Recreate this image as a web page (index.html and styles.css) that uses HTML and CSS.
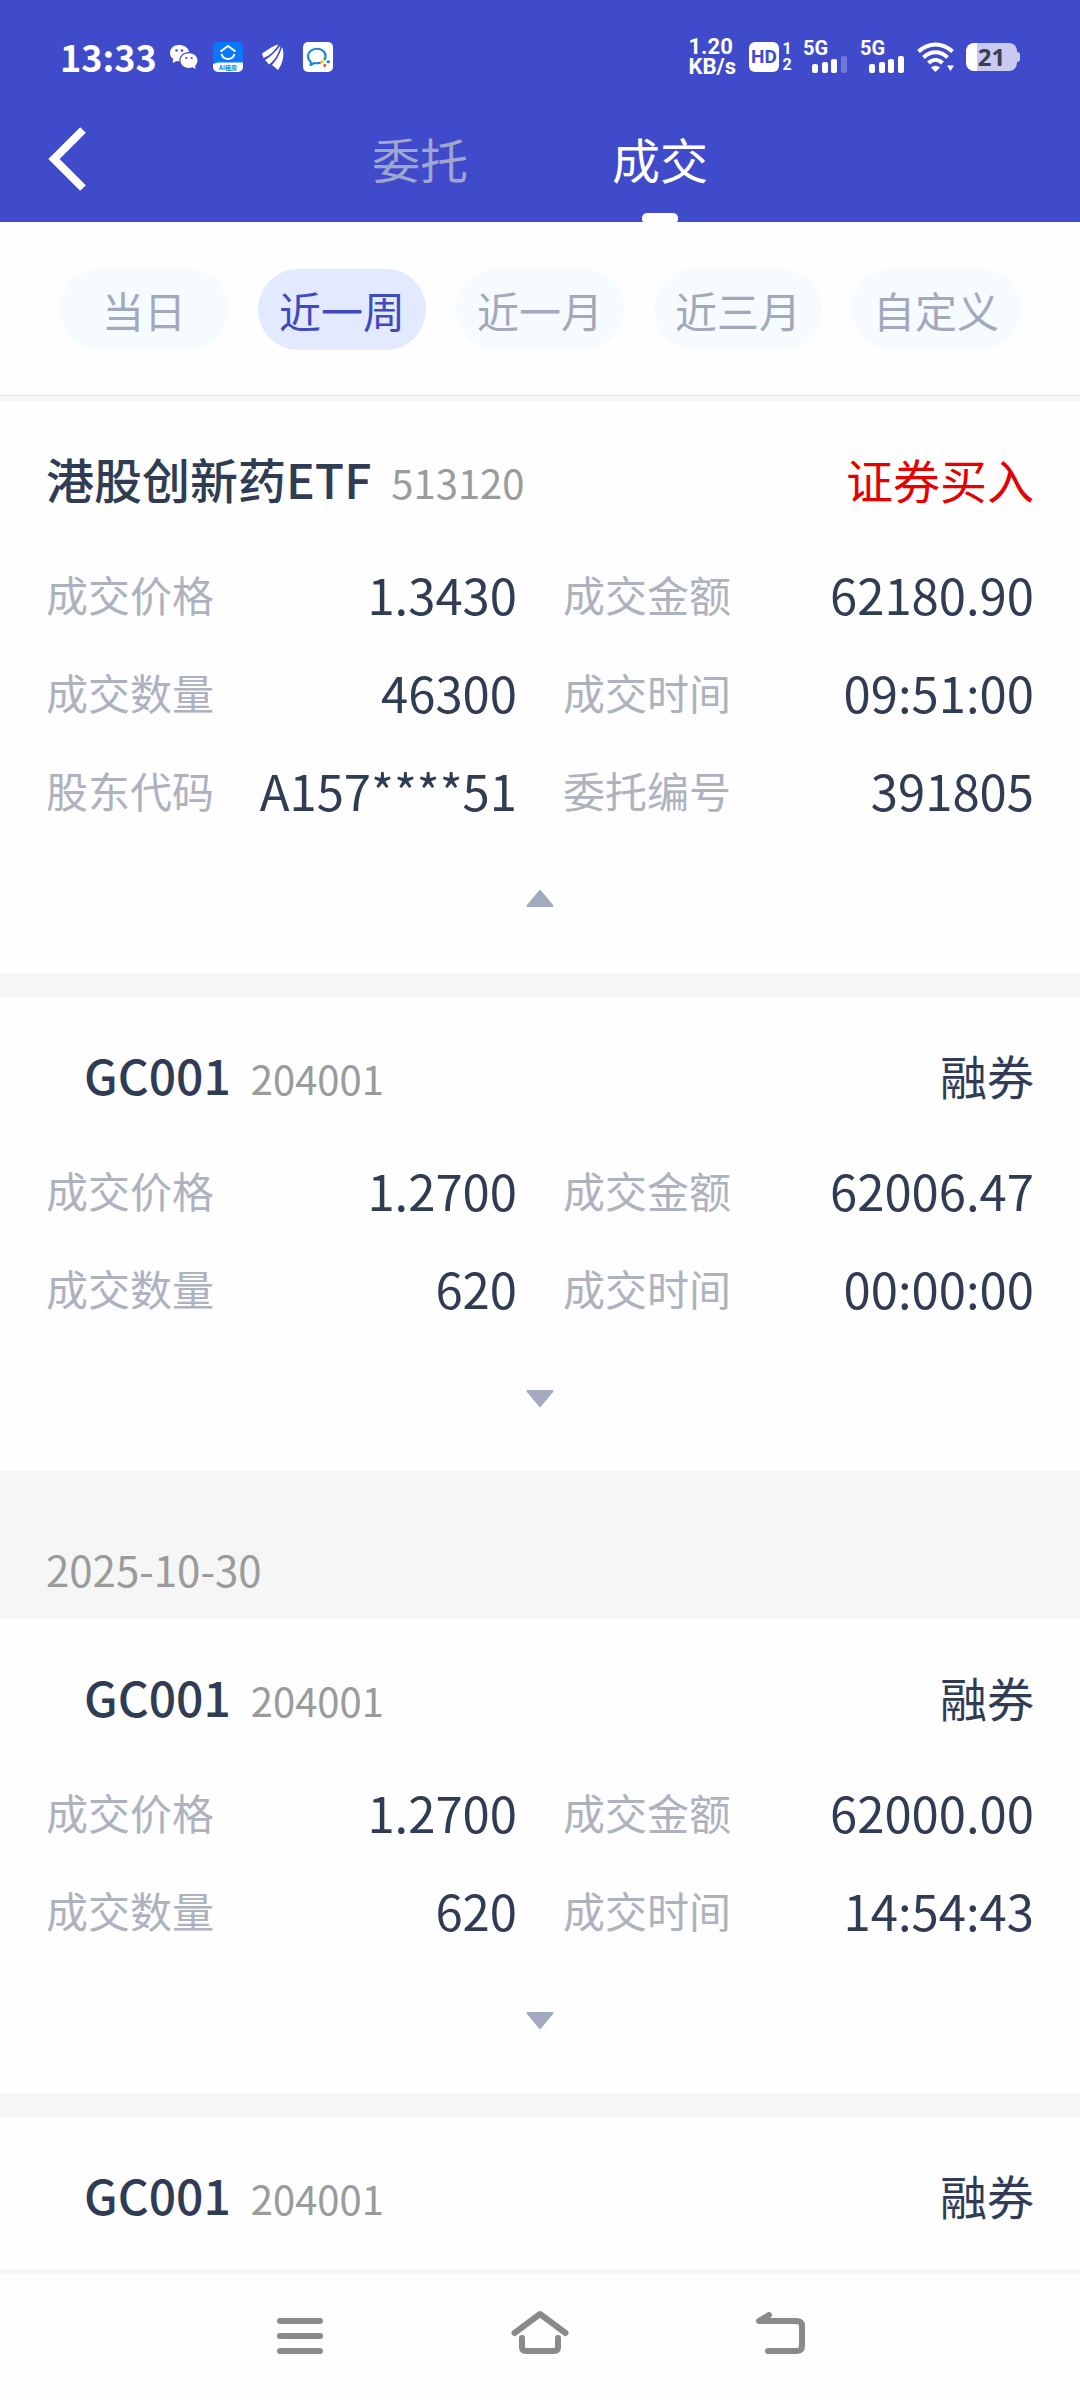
FILE: index.html
```html
<!DOCTYPE html>
<html lang="zh-CN">
<head>
<meta charset="utf-8">
<meta name="viewport" content="width=device-width, initial-scale=1">
<title>成交</title>
<link rel="stylesheet" href="styles.css">
</head>
<body>
<div class="app">
  <header class="header">
    <div class="status">
      <div class="status-left">
        <span class="clock">13:33</span>
        <svg class="ico-wechat" viewBox="0 0 30 26" aria-hidden="true">
          <path fill="#fff" d="M10 1C4.500 1 1 4.500 1 9c0 2.500 1.200 4.600 3.200 6L3.600 19l4.200-2c1 .2 1.700.2 2.600.2C10 12 14 8 20.300 8 19 3.500 15 1 10 1z"/>
          <path fill="#fff" d="M20 9.200c-5 0-8.500 3.200-8.500 7.300s3.500 7.400 8.500 7.400c1.200 0 2.300-.2 3.400-.6l3.300 1.800-.7-3.200c1.600-1.300 2.500-3.200 2.500-5.400 0-4.100-3.500-7.300-8.500-7.300z"/>
          <g fill="#3f4bcb"><circle cx="7.500" cy="6.500" r="1.300"/><circle cx="13" cy="6.500" r="1.300"/><circle cx="17.300" cy="14" r="1.100"/><circle cx="22.700" cy="14" r="1.100"/></g>
        </svg>
        <svg class="ico-app" viewBox="0 0 30 30" aria-hidden="true">
          <rect width="30" height="30" rx="5" fill="#0a78fa"/>
          <path d="M0 22L5 20.500H30V25a5 5 0 0 1-5 5H5a5 5 0 0 1-5-5z" fill="#fff"/>
          <path d="M7.500 9.500L15 4l7.500 5.500M8.500 12c2 6.500 11 6.500 13 0" fill="none" stroke="#fff" stroke-width="2" stroke-linejoin="round"/>
          <text x="15" y="28" text-anchor="middle" font-size="6" font-weight="700" fill="#0a78fa">AI租房</text>
        </svg>
        <svg class="ico-wing" viewBox="0 0 24 28" aria-hidden="true">
          <path fill="#fff" d="M17.500 1.500C11 3 5 8 1 10.500L2.500 15C8 13 14 8 17.500 1.500zM19.500 2.500C15 9 9 14 4 17L8 21.500C13 18 18 11 19.500 2.500zM21 4C19 11 15 18 11 22L17 27C22 20 24 11 21 4z"/>
        </svg>
        <svg class="ico-chat" viewBox="0 0 30 30" aria-hidden="true">
          <rect width="30" height="30" rx="5" fill="#fff"/>
          <path d="M22.500 15.500c.8-5-3-8.800-8.500-8.800-5.500 0-9 3.500-9 7.500 0 2.300 1 4.200 2.800 5.600L7.500 23l3.800-2c2 .5 4 .4 6-.2" fill="none" stroke="#1485dd" stroke-width="2" stroke-linecap="round" stroke-linejoin="round"/>
          <g stroke-width="3" stroke-linecap="round"><path d="M21.800 16.500v.5" stroke="#35b34a"/><path d="M25 19.800h.5" stroke="#1485dd"/><path d="M21.800 23.200v.3" stroke="#f0562d"/><path d="M18.500 19.800h.5" stroke="#f9bd17"/></g>
        </svg>
      </div>
      <div class="status-right">
        <div class="speed"><span>1.20</span><span>KB/s</span></div>
        <span class="hd">HD</span>
        <span class="sims"><span>1</span><span>2</span></span>
        <div class="signal">
          <span class="net">5G</span>
          <svg viewBox="0 0 36 17" aria-hidden="true"><g fill="#fff"><rect y="8" width="6" height="9" rx="2"/><rect x="10" y="6" width="6" height="11" rx="2"/><rect x="19" y="3" width="6" height="14" rx="2"/><rect x="29" width="6" height="17" rx="2" opacity=".25"/></g></svg>
        </div>
        <div class="signal">
          <span class="net">5G</span>
          <svg viewBox="0 0 36 17" aria-hidden="true"><g fill="#fff"><rect y="8" width="6" height="9" rx="2"/><rect x="10" y="6" width="6" height="11" rx="2"/><rect x="19" y="3" width="6" height="14" rx="2"/><rect x="29" width="6" height="17" rx="2"/></g></svg>
        </div>
        <svg class="ico-wifi" viewBox="0 0 38 30" aria-hidden="true">
          <path d="M1.500 9.500c10-9.500 24-9.500 34 0M6.500 15.500c7-7 17-7 24 0M11.500 21c4.200-4 9.800-4 14 0" fill="none" stroke="#fff" stroke-width="4"/>
          <path d="M14 25.500q4.500-3.500 9 0L18.500 30zM30 23.500h7l-3.500 5.500z" fill="#fff"/>
        </svg>
        <div class="battery"><span>21</span></div>
      </div>
    </div>
    <div class="titlebar">
      <button class="back" aria-label="返回">
        <svg viewBox="0 0 38 64" aria-hidden="true"><path d="M35 3L6 32l29 29" fill="none" stroke="#fff" stroke-width="8"/></svg>
      </button>
      <nav class="tabs">
        <a class="tab" href="#orders">委托</a>
        <a class="tab is-active" href="#deals" aria-current="page">成交</a>
      </nav>
    </div>
  </header>

  <div class="filters">
    <button class="chip">当日</button>
    <button class="chip is-active">近一周</button>
    <button class="chip">近一月</button>
    <button class="chip">近三月</button>
    <button class="chip">自定义</button>
  </div>

  <main class="list" id="deals">
    <article class="card">
      <div class="card-head"><h2 class="name">港股创新药ETF</h2><span class="code">513120</span><span class="side buy">证券买入</span></div>
      <dl class="fields">
        <div class="field"><dt>成交价格</dt><dd>1.3430</dd></div>
        <div class="field"><dt>成交金额</dt><dd>62180.90</dd></div>
        <div class="field"><dt>成交数量</dt><dd>46300</dd></div>
        <div class="field"><dt>成交时间</dt><dd>09:51:00</dd></div>
        <div class="field"><dt>股东代码</dt><dd>A157****51</dd></div>
        <div class="field"><dt>委托编号</dt><dd>391805</dd></div>
      </dl>
      <button class="toggle" aria-label="收起"><svg viewBox="0 0 28 22" aria-hidden="true"><path d="M14 2L26.500 17h-25z"/></svg></button>
    </article>

    <article class="card">
      <div class="card-head indent"><h2 class="name">GC001</h2><span class="code">204001</span><span class="side">融券</span></div>
      <dl class="fields">
        <div class="field"><dt>成交价格</dt><dd>1.2700</dd></div>
        <div class="field"><dt>成交金额</dt><dd>62006.47</dd></div>
        <div class="field"><dt>成交数量</dt><dd>620</dd></div>
        <div class="field"><dt>成交时间</dt><dd>00:00:00</dd></div>
      </dl>
      <button class="toggle" aria-label="展开"><svg viewBox="0 0 28 22" aria-hidden="true"><path d="M14 19L1.500 4h25z"/></svg></button>
    </article>

    <h3 class="date">2025-10-30</h3>

    <article class="card">
      <div class="card-head indent"><h2 class="name">GC001</h2><span class="code">204001</span><span class="side">融券</span></div>
      <dl class="fields">
        <div class="field"><dt>成交价格</dt><dd>1.2700</dd></div>
        <div class="field"><dt>成交金额</dt><dd>62000.00</dd></div>
        <div class="field"><dt>成交数量</dt><dd>620</dd></div>
        <div class="field"><dt>成交时间</dt><dd>14:54:43</dd></div>
      </dl>
      <button class="toggle" aria-label="展开"><svg viewBox="0 0 28 22" aria-hidden="true"><path d="M14 19L1.500 4h25z"/></svg></button>
    </article>

    <article class="card">
      <div class="card-head indent"><h2 class="name">GC001</h2><span class="code">204001</span><span class="side">融券</span></div>
    </article>
  </main>

  <nav class="sysnav">
    <button aria-label="最近任务"><svg viewBox="0 0 60 60" aria-hidden="true"><path d="M10 15h40M10 30h40M10 45h40"/></svg></button>
    <button aria-label="主屏幕"><svg viewBox="0 0 60 60" aria-hidden="true"><path d="M4.500 27L30 8l25.500 19M12 32v9q0 4 4 4h28q4 0 4-4v-9"/></svg></button>
    <button aria-label="返回上一级"><svg viewBox="0 0 60 60" aria-hidden="true"><path d="M19 9L9 15h37q6 0 6 5v20q0 5-6 5H18"/></svg></button>
  </nav>
</div>
</body>
</html>
```
FILE: styles.css
```css
* { box-sizing: border-box; }

body {
  margin: 0;
  background: #fefefe;
  color: #303b54;
  font-family: "Noto Sans CJK SC", "Noto Sans", sans-serif;
}

button {
  padding: 0;
  border: 0;
  background: none;
  font: inherit;
  color: inherit;
}

h2, h3, dl, dd { margin: 0; font-weight: 400; }
svg { display: block; }

.app {
  display: flex;
  flex-direction: column;
  height: 100vh;
}

.header {
  flex: none;
  background: #3f4bcb;
  color: #fff;
}

/* status bar */
.status {
  display: flex;
  justify-content: space-between;
  align-items: center;
  height: 100px;
  padding: 14px 63px 0 60px;
}
.status-left, .status-right { display: flex; align-items: center; }
.clock { font-size: 36px; font-weight: 700; line-height: 40px; margin: 0 12px 3px 0; }
.ico-wechat { width: 30px; height: 26px; margin-right: 14px; }
.ico-app, .ico-chat { width: 30px; height: 30px; }
.ico-wing { width: 24px; height: 28px; margin: 0 18px 0 18px; }
.speed {
  display: flex;
  flex-direction: column;
  margin: 0 13px 0 0;
  font: 700 22px/20px Roboto, sans-serif;
}
.hd {
  width: 30px;
  height: 30px;
  border-radius: 6px;
  background: #fff;
  color: #3f4bcb;
  font: 700 19px/30px Roboto, sans-serif;
  text-align: center;
}
.sims {
  display: flex;
  flex-direction: column;
  align-items: center;
  width: 10px;
  margin: 0 11px 0 3px;
  font: 700 16px/16px Roboto, sans-serif;
}
.signal {
  display: flex;
  flex-direction: column;
  width: 45px;
  height: 32px;
  margin-right: 12px;
}
.net { font: 700 20px/15px Roboto, sans-serif; }
.signal svg { width: 36px; height: 17px; margin: 0 0 0 9px; }
.ico-wifi { width: 38px; height: 30px; margin-right: 11px; }
.battery {
  position: relative;
  width: 51px;
  height: 28px;
  border-radius: 8px;
  background: linear-gradient(90deg, #fff 11px, #c8caf0 11px);
  color: #3d3f50;
  font: 700 24px/28px "Noto Sans", sans-serif;
  text-align: center;
}
.battery::after {
  content: "";
  position: absolute;
  right: -3px;
  top: 9px;
  width: 3px;
  height: 10px;
  border-radius: 0 3px 3px 0;
  background: #c8caf0;
}

/* title bar */
.titlebar {
  display: grid;
  grid-template-columns: 1fr auto 1fr;
  height: 122px;
}
.back { justify-self: start; align-self: start; padding: 27px 48px; }
.back svg { width: 38px; height: 64px; }
.tabs { display: flex; gap: 144px; }
.tab {
  position: relative;
  height: 122px;
  color: #a0a5cf;
  font-size: 48px;
  line-height: 116px;
  text-decoration: none;
}
.tab.is-active { color: #fff; }
.tab.is-active::after {
  content: "";
  position: absolute;
  left: 50%;
  bottom: 0;
  width: 36px;
  height: 9px;
  margin-left: -18px;
  border-radius: 5px 5px 2px 2px;
  background: #fff;
}

/* period filter */
.filters {
  flex: none;
  display: grid;
  grid-template-columns: repeat(5, 1fr);
  gap: 30px;
  padding: 47px 60px 45px;
  border-bottom: 1px solid #e4e4e4;
}
.chip {
  height: 81px;
  border-radius: 40px;
  background: #f6fbff;
  color: #a3a9bd;
  font-size: 42px;
  line-height: 79px;
  white-space: nowrap;
}
.chip.is-active { background: #e3e9fe; color: #3f4bbd; }

/* deals */
.list {
  flex: 1;
  min-height: 0;
  overflow: hidden;
  padding-top: 5px;
  background: #f6f6f6;
}
.card { background: #fefefe; }
.card + .card { margin-top: 24px; }
.card:last-child { padding-bottom: 24px; }
.card-head {
  display: flex;
  align-items: baseline;
  height: 147px;
  padding: 41px 46px 0;
}
.card-head.indent { padding-left: 84px; }
.name { font-size: 48px; font-weight: 500; line-height: 72px; }
.code { margin-left: 20px; color: #9b9b9b; font-size: 40px; line-height: 72px; }
.side { margin-left: auto; font-size: 47px; line-height: 70px; }
.side.buy { color: #e60000; }

.fields {
  display: grid;
  grid-template-columns: 1fr 1fr;
  column-gap: 46px;
  padding: 0 46px;
}
.field {
  display: flex;
  justify-content: space-between;
  align-items: center;
  height: 98px;
  padding-bottom: 6px;
}
dt { color: #adb2be; font-size: 42px; line-height: 60px; }
dd { font-size: 49px; line-height: 60px; }

.toggle {
  display: flex;
  justify-content: center;
  width: 100%;
  height: 131px;
  padding-top: 47px;
}
.toggle svg { width: 28px; height: 22px; fill: #a3a9be; stroke: #a3a9be; stroke-width: 2; stroke-linejoin: round; }

.date {
  height: 148px;
  padding: 68px 46px 0;
  color: #9b9b9b;
  font-size: 42px;
  line-height: 60px;
}

/* system navigation */
.sysnav {
  flex: none;
  display: flex;
  justify-content: center;
  gap: 180px;
  height: 131px;
  padding-top: 32px;
  border-top: 5px solid #f6f6f6;
}
.sysnav button { width: 60px; height: 60px; }
.sysnav svg {
  width: 60px;
  height: 60px;
  fill: none;
  stroke: #8b898b;
  stroke-width: 6;
  stroke-linecap: round;
  stroke-linejoin: round;
}
```
